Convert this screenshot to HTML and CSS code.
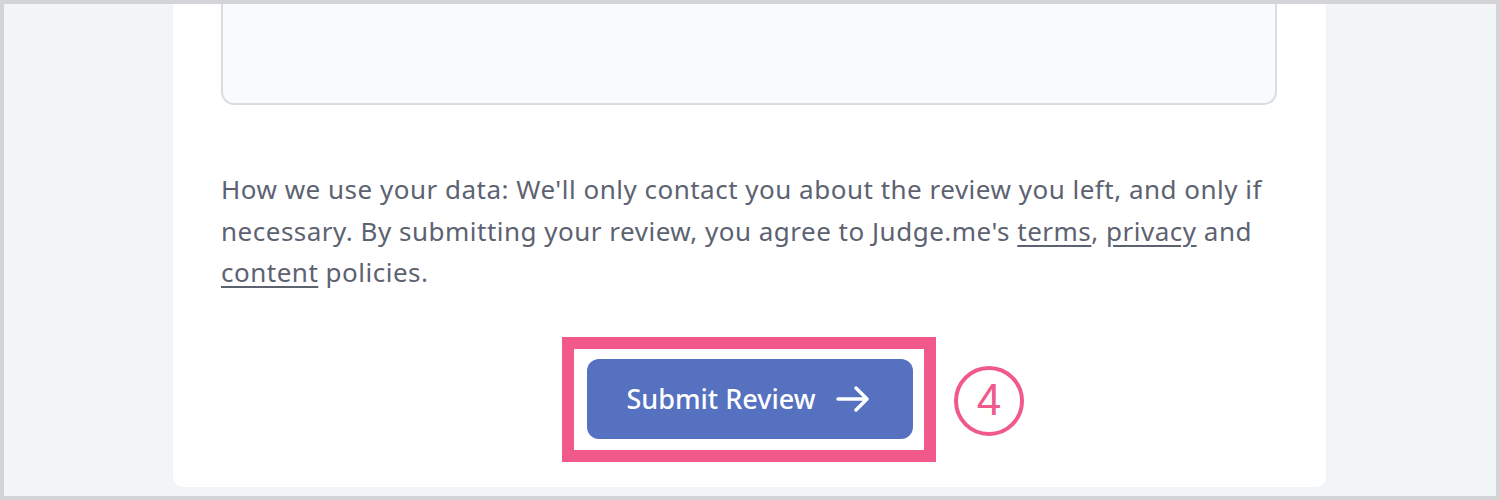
FILE: index.html
```html
<!DOCTYPE html>
<html lang="en">
<head>
<meta charset="utf-8">
<title>Review form</title>
<link rel="stylesheet" href="styles.css">
</head>
<body>
<div class="frame">
  <div class="card">
    <div class="textarea"></div>
    <p class="notice">How we use your data: We'll only contact you about the review you left, and only if necessary. By submitting your review, you agree to Judge.me's <a href="#">terms</a>, <a href="#">privacy</a> and <a href="#">content</a> policies.</p>
    <div class="actions">
      <div class="highlight">
        <button class="submit" type="button">
          <span>Submit Review</span>
          <svg class="arrow" width="34" height="26" viewBox="0 0 34 26" aria-hidden="true"><path d="M2 13H31M20 2L31 13L20 24" fill="none" stroke="#fff" stroke-width="3.4" stroke-linecap="round" stroke-linejoin="round"/></svg>
        </button>
        <span class="step">4</span>
      </div>
    </div>
  </div>
</div>
</body>
</html>
```

FILE: styles.css
```css
html, body {
  margin: 0;
  padding: 0;
}
body {
  width: 1500px;
  height: 500px;
  overflow: hidden;
  font-family: "Noto Sans", "Open Sans", sans-serif;
}
.frame {
  box-sizing: border-box;
  width: 1500px;
  height: 500px;
  border: 4px solid #d2d4d7;
  background: #f2f5f8;
  overflow: hidden;
}
.card {
  box-sizing: border-box;
  margin-left: 169px;
  width: 1153px;
  height: 483px;
  background: #ffffff;
  border-radius: 0 0 10px 10px;
  padding: 0 49px 24px 48px;
  display: flex;
  flex-direction: column;
}
.textarea {
  box-sizing: border-box;
  height: 101px;
  background: #f9fafb;
  border: 2px solid #d9dce1;
  border-top: none;
  border-radius: 0 0 13px 13px;
}
.notice {
  margin: 64px 0 0;
  font-size: 26px;
  line-height: 41.5px;
  color: #5d6271;
  letter-spacing: 0.5px;
}
.notice a {
  color: #5d6271;
  text-decoration: underline;
  text-underline-offset: 4px;
  text-decoration-thickness: 1.5px;
}
.actions {
  margin-top: 43px;
  display: flex;
  justify-content: center;
}
.highlight {
  position: relative;
  border: 12px solid #f1598b;
  padding: 10px 11px 11px 13px;
  display: flex;
}
.submit {
  width: 326px;
  height: 80px;
  border: none;
  border-radius: 12px;
  background: #5571c0;
  color: #ffffff;
  font-family: "Noto Sans", "Open Sans", sans-serif;
  font-size: 27px;
  font-weight: 500;
  display: flex;
  align-items: center;
  justify-content: center;
  gap: 20px;
  padding: 0 4px 0 0;
}
.arrow {
  display: block;
}
.step {
  position: absolute;
  left: 380px;
  top: 17px;
  box-sizing: border-box;
  width: 70px;
  height: 70px;
  border: 4px solid #ef5a8b;
  border-radius: 50%;
  color: #ef5a8b;
  font-size: 44px;
  line-height: 60px;
  text-align: center;
  font-family: "Liberation Sans Narrow", "Liberation Sans", sans-serif;
}
```
